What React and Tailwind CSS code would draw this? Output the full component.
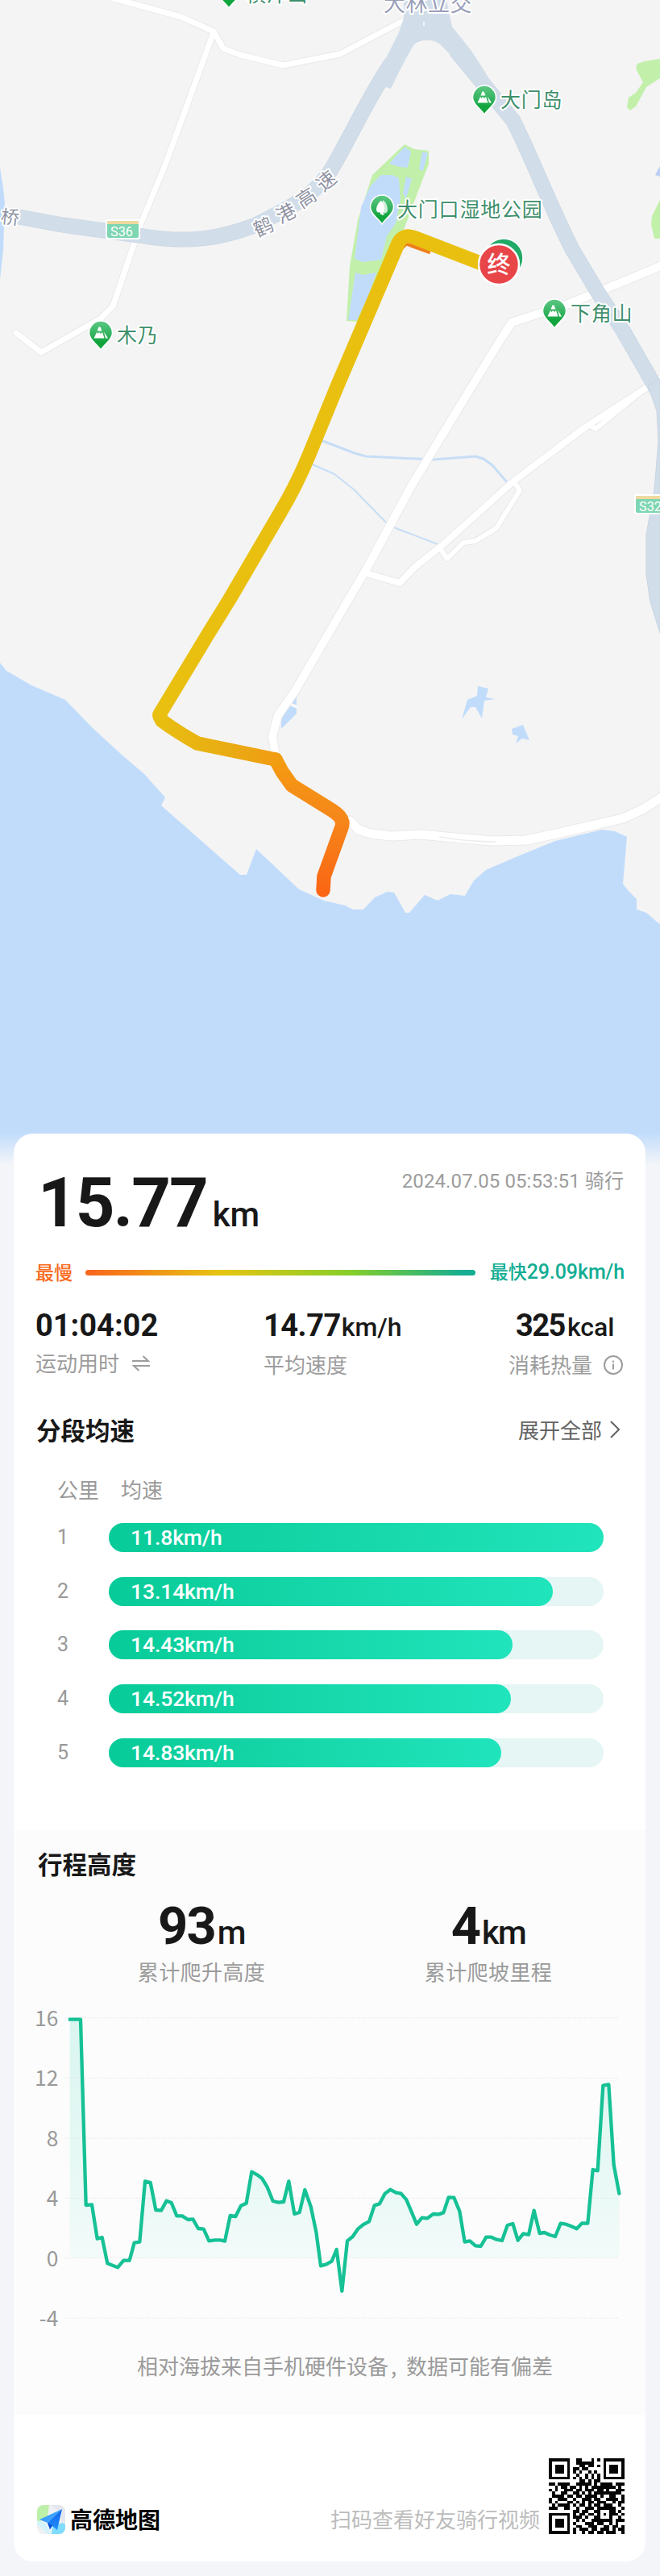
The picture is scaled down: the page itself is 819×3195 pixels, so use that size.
import React from "react";

const SANS = "font-['Noto_Sans_CJK_SC',sans-serif]";
const NUM = "font-['Roboto','Noto_Sans_CJK_SC',sans-serif]";

function Pin({ x, y, tree }) {
  return (
    <g transform={`translate(${x} ${y})`}>
      <path d="M-14.5 0A14.5 15 0 0 1 14.5 0C14.5 9 4 14 0 21C-4 14 -14.5 9 -14.5 0Z" fill="url(#pin)" stroke="#fff" strokeWidth="1.5" />
      {tree ? (
        <g fill="#fff">
          <path d="M1 -9C5 -7 7 -1 7 3C7 7 4 8 2.500 7.500V10H0V-5Z" opacity=".75" />
          <path d="M-1 -8C-5 -6 -7 0 -7 3C-7 6 -4 7 -2 6.500V9H0.500V6.500C4 6 4 -4 -1 -8Z" />
        </g>
      ) : (
        <g fill="#fff">
          <path d="M-4.500 -2.500L-2.500 -7.500H-0.500L1.500 -2.500Z" />
          <path d="M-5 -1L-8.500 6.500H4.500L2 -1L0 1L-2 -1L-3.500 1Z" />
          <path d="M4 -1.500L9 6.500H6Z" />
        </g>
      )}
    </g>
  );
}

function Label({ x, y, fill = "#3f8f6c", size = 25, spacing = 0.8, rotate = 0, anchor = "start", children }) {
  return (
    <text
      x={x}
      y={y - 1.5}
      transform={rotate ? `rotate(${rotate} ${x} ${y})` : undefined}
      fill={fill}
      fontSize={size}
      letterSpacing={spacing}
      textAnchor={anchor}
      dominantBaseline="central"
      stroke="#fff"
      strokeWidth="4"
      strokeLinejoin="round"
      paintOrder="stroke"
    >
      {children}
    </text>
  );
}

function Shield({ x, y, children }) {
  return (
    <g transform={`translate(${x} ${y})`}>
      <rect width="43" height="25" rx="3" fill="#fff" />
      <rect x="2" y="2" width="39" height="21" rx="2" fill="#7ed6b2" />
      <path d="M2 6V4Q2 2 4 2H39Q41 2 41 4V6Z" fill="#eed9a0" />
      <text x="20" y="20.500" fill="#fff" fontSize="17" textAnchor="middle" textLength="28" lengthAdjust="spacingAndGlyphs" fontFamily="Roboto">{children}</text>
    </g>
  );
}

const WHITE_ROADS = [
  [7, "141,-2 225,21 265,39 277,60 298,68 351,81 422,67 498,27"],
  [7, "265,40 225,150 204,207 175,277 140,380 125,395 51,437 20,413"],
  [10, "822,329 747,360 705,377 635,400 622,420 585,480 512,600 454,707 407,787 366,857 345,887 338,913 341,932"],
  [8, "822,468 802,481 726,530 637,597 548,677 515,703 496,723 454,711"],
  [6, "637,597 645,608 616,655 590,671 575,673 555,693 546,680"],
  [6, "788,492 739,532 731,527"],
  [11, "434,1018 445,1029 460,1034 486,1037 522,1035 564,1039 611,1043 653,1042 695,1033 773,1015 799,1003 822,988"],
];

function RouteMap() {
  return (
    <svg className={`block h-[1445px] w-[819px] ${SANS}`} viewBox="0 0 819 1445">
      <defs>
        <linearGradient id="pin" x1="0" y1="0" x2="0" y2="1">
          <stop offset="0" stopColor="#5cc983" />
          <stop offset="0.55" stopColor="#2cae58" />
          <stop offset="0.72" stopColor="#0fa53c" />
          <stop offset="1" stopColor="#0fa53c" />
        </linearGradient>
        <linearGradient id="mid" gradientUnits="userSpaceOnUse" x1="198" y1="0" x2="342" y2="0">
          <stop offset="0" stopColor="#e9be10" />
          <stop offset="0.6" stopColor="#e9ab14" />
          <stop offset="1" stopColor="#f19d12" />
        </linearGradient>
        <linearGradient id="end" gradientUnits="userSpaceOnUse" x1="0" y1="942" x2="0" y2="1112">
          <stop offset="0" stopColor="#f59b10" />
          <stop offset="0.4" stopColor="#f5881a" />
          <stop offset="1" stopColor="#fb6414" />
        </linearGradient>
        <linearGradient id="fade" x1="0" y1="0" x2="0" y2="1">
          <stop offset="0" stopColor="#f4f5f9" stopOpacity="0" />
          <stop offset="1" stopColor="#f4f5f9" />
        </linearGradient>
      </defs>
      <rect width="819" height="1445" fill="#f4f4f4" />

      <g fill="#c1dcfb">
        <path d="M0 822L8 832L39 850L81 868L115 903L151 936L179 960L205 989L200 999L298 1085H306L318 1053L371 1103L402 1117L428 1123L438 1128H451L465 1113L481 1106L489 1107L503 1132H508L527 1110L543 1117L559 1109L577 1111L588 1092L603 1079L640 1063L689 1043L747 1029L763 1031L778 1038L773 1096L779 1104L790 1115V1128L802 1132L816 1144L819 1146V1445H0Z" />
        <path d="M0 208L4 233L6 253L4 310L0 347Z" />
        <path d="M593 851L606 854L603 865L614 867L601 869L598 891L590 877H584L573 892L580 868L592 863Z" />
        <path d="M635 904L649 899L657 918L648 916L640 922L643 913L636 911Z" />
        <path d="M368 858V885L360 893L349 904V888L360 863Z" />
        <path d="M819 206L813 217L819 219Z" fill="#b9cff5" />
      </g>
      <g fill="#c2f0aa">
        <path d="M819 73L800 76L791 79Q788 83 791 89L798 102L789 115L780 121L778 133L782 137L789 132L802 108L819 97Z" />
        <path d="M819 248L809 268L808 278L812 296H819Z" />
        <path d="M502 179L514 185L532 187V203L514 250L498 293L473 337L444 399L430 398L434 330L444 273L462 217Z" />
      </g>
      <g fill="#c1dcfb">
        <path d="M502 182L510 188L506 208L496 207L483 203Z" />
        <path d="M473 217L487 217L495 221L497 247L491 277L480 293L473 322L450 325L440 321L448 257L460 230Z" />
        <path d="M441 338L450 341L467 338L458 365L443 397H432Z" />
        <path d="M524 188L531 190L525 212L520 210Z" />
        <path d="M504 219L511 222L504 246L500 240Z" />
      </g>
      <path d="M357 872L369 877" stroke="#f8f8f8" strokeWidth="4" />

      <g fill="none" stroke="#c7ddf6" strokeLinejoin="round">
        <path d="M398 546L440 562L454 566L538 570L590 566L600 569L611 577L629 598" strokeWidth="3" />
        <path d="M385 575L415 588L439 607L478 647L491 655L543 675" strokeWidth="2" />
      </g>

      <g fill="none" strokeLinejoin="round" strokeLinecap="round">
        {WHITE_ROADS.map(([w, p]) => (
          <polyline key={p} points={p} stroke="#e9e9ea" strokeWidth={w + 2} />
        ))}
        {WHITE_ROADS.map(([w, p]) => (
          <polyline key={p} points={p} stroke="#fff" strokeWidth={w} />
        ))}
      </g>
      <path d="M545 1038Q580 1044 615 1044" stroke="#ececec" strokeWidth="1.500" fill="none" />

      <g fill="none" stroke="#c9d5e2" strokeWidth="19">
        <path d="M18 268L78 279L172 292C230 302 270 297 315 280C360 258 395 240 413 207C440 160 460 115 486 78" />
        <path d="M565 62L603 108L637 150C660 195 680 250 710 309L742 363L773 410L819 490" />
      </g>
      <g fill="none" stroke="#d1deea" strokeWidth="17.500">
        <path d="M18 268L78 279L172 292C230 302 270 297 315 280C360 258 395 240 413 207C440 160 460 115 486 78" />
        <path d="M565 62L603 108L637 150C660 195 680 250 710 309L742 363L773 410L819 490" />
      </g>
      <path d="M501 0V22L495 40L474 82L466 104L485 110Q500 78 514 55Q520 50 530 50Q540 50 546 55Q570 78 595 110L610 102L585 63L561 33L554 0Z" fill="#d1deea" />
      <path d="M804 478L815 510L817 547L812 607L802 663V713L807 747L819 785V470Z" fill="#d1deea" stroke="#c9d5e2" />
      <path d="M526 27V32" stroke="#f4f4f4" strokeWidth="2" />

      <g fill="none" strokeWidth="17.500" strokeLinejoin="round">
        <path d="M498 308L504 302L534 313" stroke="#ee7f1c" strokeWidth="5" />
        <path d="M342 942L350 957L362 974L412 1005Q428 1015 424 1026L402 1087L401 1104" stroke="url(#end)" strokeLinecap="round" />
        <path d="M198 888L201 894Q220 908 245 922L342 942" stroke="url(#mid)" strokeLinecap="round" />
        <path d="M606 330L515 295Q500 289 494 302L418 480L384 563Q368 602 347 637L285 743L256 790L198 886" stroke="#e9c010" strokeLinecap="round" />
      </g>

      <circle cx="625" cy="320" r="24" fill="#21a966" stroke="#fff" strokeWidth="1.500" />
      <circle cx="619" cy="328" r="25" fill="#e84549" stroke="#fff" strokeWidth="2.500" />
      <text x="619" y="326" fill="#fff" fontSize="29" fontWeight="500" textAnchor="middle" dominantBaseline="central">终</text>

      <Pin x={284} y={-11} />
      <Pin x={601} y={121} />
      <Pin x={474} y={257} tree />
      <Pin x={688} y={386} />
      <Pin x={125} y={413} />
      <Label x={305} y={-8}>横洋山</Label>
      <Label x={621} y={123}>大门岛</Label>
      <Label x={493} y={259}>大门口湿地公园</Label>
      <Label x={708} y={388}>下角山</Label>
      <Label x={145} y={415}>木乃</Label>
      <Label x={476} y={4} fill="#999eb8" size={27} spacing={0.5}>大林立交</Label>
      <Label x={327} y={281} fill="#9093a3" size={24} rotate={-24} anchor="middle">鹤</Label>
      <Label x={355} y={264} fill="#9093a3" size={24} rotate={-28} anchor="middle">港</Label>
      <Label x={380} y={245} fill="#9093a3" size={24} rotate={-33} anchor="middle">高</Label>
      <Label x={405} y={224} fill="#9093a3" size={24} rotate={-40} anchor="middle">速</Label>
      <Label x={13} y={269} fill="#9093a3" size={23} rotate={6} anchor="middle">桥</Label>
      <Shield x={131} y={272}>S36</Shield>
      <Shield x={787} y={613}>S32</Shield>
      <rect y="1405" width="819" height="40" fill="url(#fade)" />
    </svg>
  );
}

const SPLITS = [
  { km: 1, speed: "11.8km/h", width: 614 },
  { km: 2, speed: "13.14km/h", width: 551 },
  { km: 3, speed: "14.43km/h", width: 501 },
  { km: 4, speed: "14.52km/h", width: 499 },
  { km: 5, speed: "14.83km/h", width: 487 },
];

const ELEVATION =
  "260,104 300,104 320,795 342,793 362,920 380,915 400,1012 438,1027 460,1001 482,1001 500,935 520,932 540,706 560,711 580,813 600,815 620,779 638,786 658,835 678,835 700,849 718,847 738,882 758,884 778,928 800,925 820,925 837,929 857,834 877,837 897,797 917,788 937,671 957,682 975,695 995,728 1016,780 1036,785 1056,783 1075,706 1096,828 1115,822 1135,738 1157,800 1177,895 1194,1021 1215,1015 1235,1004 1253,960 1273,1115 1293,928 1313,912 1333,883 1353,867 1374,856 1394,796 1413,790 1433,752 1453,737 1473,748 1493,752 1513,775 1531,818 1551,866 1571,842 1591,844 1613,828 1633,829 1651,823 1670,766 1690,767 1711,818 1730,932 1749,928 1770,946 1790,948 1810,914 1829,914 1849,923 1869,927 1889,870 1909,864 1928,926 1948,901 1968,905 1988,815 2009,900 2027,897 2047,906 2067,912 2087,863 2107,866 2127,874 2147,883 2167,862 2188,863 2207,663 2225,667 2245,350 2266,346 2285,645 2305,752";

const AXIS = [
  ["16", 98],
  ["12", 322],
  ["8", 546],
  ["4", 769],
  ["0", 992],
  ["-4", 1215],
];

function ElevationChart() {
  return (
    <svg className={`block h-[420px] w-[784px] ${SANS}`} viewBox="51 0 2352 1260">
      <defs>
        <linearGradient id="area" gradientUnits="userSpaceOnUse" x1="0" y1="104" x2="0" y2="992">
          <stop offset="0" stopColor="#d9f5ef" />
          <stop offset="0.7" stopColor="#e9f9f6" />
          <stop offset="1" stopColor="#f3fafa" />
        </linearGradient>
        <clipPath id="above">
          <rect x="0" y="0" width="2457" height="992" />
        </clipPath>
      </defs>
      <polygon points={`260,992 ${ELEVATION} 2305,992`} fill="url(#area)" clipPath="url(#above)" />
      {AXIS.map(([t, y]) => (
        <g key={t}>
          <path d={`M242 ${y}H2305`} stroke="#e6e6e6" strokeWidth="3" strokeDasharray="6 6" />
          <text x="217" y={y + 30} textAnchor="end" fontSize="79" fill="#999">{t}</text>
        </g>
      ))}
      <polyline points={ELEVATION} fill="none" stroke="#16c195" strokeWidth="13" strokeLinejoin="round" strokeLinecap="round" />
    </svg>
  );
}

const QR = [
  "1111111001100010101111111",
  "1000001001111110001000001",
  "1011101000110110101011101",
  "1011101011011000001011101",
  "1011101010100101001011101",
  "1000001001001010101000001",
  "1111111010101010101111111",
  "0000000000110101100000000",
  "1101111001111101011110111",
  "0010110110101011111111010",
  "1010011101101110110100111",
  "0100110011010101111111110",
  "0111101101101111010011001",
  "1001110010011101100111101",
  "1010001101010110111001011",
  "0101111010110101101110010",
  "1110011001001110111111001",
  "0000000011011001100011010",
  "1111111010110110101011101",
  "1000001011101001100010010",
  "1011101001010011111110111",
  "1011101010001110110010100",
  "1011101001100111001101101",
  "1000001010111011011101011",
  "1111111010010110110111001",
];

function QrCode() {
  return (
    <svg className="block h-[94px] w-[94px]" viewBox="0 0 25 25" shapeRendering="crispEdges">
      {QR.map((row, y) =>
        [...row].map((c, x) => (c === "1" ? <rect key={`${x}-${y}`} x={x} y={y} width="1" height="1" fill="#050505" /> : null))
      )}
    </svg>
  );
}

function AmapLogo() {
  return (
    <svg className="block h-[36px] w-[35px]" viewBox="0 0 35 36">
      <defs>
        <clipPath id="tile">
          <rect width="35" height="36" rx="8" />
        </clipPath>
        <linearGradient id="plane" x1="0" y1="0" x2="0" y2="1">
          <stop offset="0" stopColor="#0f62f0" />
          <stop offset="1" stopColor="#2290f8" />
        </linearGradient>
      </defs>
      <g clipPath="url(#tile)">
        <rect width="35" height="36" fill="#eef1f4" />
        <path d="M0 0H15L13 14L0 22Z" fill="#bdf0a8" />
        <path d="M17 0H35V36H30V10Z" fill="#e4e8ee" />
        <path d="M19 27L31 22L35 24V36H18Z" fill="#7fdcfb" />
        <path d="M0 19L10 22L18 36H14L0 24Z" fill="#d5f3fb" />
      </g>
      <path d="M31 5L3 18L13 22Z" fill="#3aa2fb" />
      <path d="M31 5L13 22L16 30L19 26L25 31Z" fill="url(#plane)" />
      <path d="M13 22L16 30L19 25Z" fill="#0a4fd0" />
    </svg>
  );
}

function Metric({ value, unit, label, className }) {
  return (
    <div className={`flex flex-col items-center ${className}`}>
      <div className={`flex h-[68px] items-baseline text-[#181818] ${NUM}`}>
        <span className="text-[65px] leading-[68px] font-bold tracking-[-2px]">{value}</span>
        <span className="ml-[3px] text-[41px] leading-[68px] font-medium tracking-[-1.500px]">{unit}</span>
      </div>
      <div className="mt-[4px] text-[26px] leading-[36px] tracking-[0.4px] text-[#9b9b9b]">{label}</div>
    </div>
  );
}

export default function App() {
  return (
    <div className={`h-[3195px] w-[819px] overflow-hidden bg-[#f4f5f9] ${SANS}`}>
      <RouteMap />
      <main className="relative mx-auto -mt-[39px] ml-[17px] flex h-[1771px] w-[784px] flex-col overflow-hidden rounded-[24px] bg-white">
        <section className="flex h-[148px] shrink-0 items-start justify-between pr-[27px] pl-[30px]">
          <div className={`mt-[36px] flex items-baseline text-[#181818] ${NUM}`}>
            <span className="text-[85px] leading-[100px] font-bold tracking-[-2px]">15.77</span>
            <span className="ml-[7px] text-[42px] leading-[100px] font-medium tracking-[-0.2px]">km</span>
          </div>
          <div className={`mt-[43px] text-[24px] leading-[32px] tracking-[0.1px] text-[#9c9c9c] ${NUM}`}>2024.07.05 05:53:51 骑行</div>
        </section>

        <section className="flex h-[46px] shrink-0 items-center pr-[26px] pl-[27px] text-[23px] leading-[46px] font-medium">
          <span className="text-[#f96a1c]">最慢</span>
          <span className="mt-[2px] ml-[16px] h-[7px] w-[484px] rounded-full bg-[linear-gradient(90deg,#f9641e_0%,#e6c512_35%,#86ce2a_68%,#16ad92_97%)]" />
          <span className="ml-auto whitespace-nowrap tracking-[-0.1px] text-[#12ad93]">
            最快<span className={`text-[25px] ${NUM}`}>29.09km/h</span>
          </span>
        </section>

        <section className="mt-[16px] flex h-[88px] shrink-0">
          <div className="w-[283px] pl-[27px]">
            <div className={`text-[38px] leading-[56px] font-bold tracking-[0px] text-[#181818] ${NUM}`}>01:04:02</div>
            <div className="flex items-center text-[26px] leading-[36px] text-[#9c9c9c]">
              运动用时
              <svg className="mt-[2px] ml-[16px] h-[22px] w-[22px]" viewBox="0 0 22 22" fill="none" stroke="#9c9c9c" strokeWidth="2">
                <path d="M0 8H20L13.500 2M22 14H2L8.500 20" />
              </svg>
            </div>
          </div>
          <div className="w-[283px] pl-[27px]">
            <div className={`flex items-baseline text-[#181818] ${NUM}`}>
              <span className="text-[38px] leading-[56px] font-bold tracking-[-0.5px]">14.77</span>
              <span className="ml-[1px] text-[32px] leading-[56px] font-medium">km/h</span>
            </div>
            <div className="text-[26px] leading-[36px] text-[#9c9c9c]">平均速度</div>
          </div>
          <div className="pl-[48px]">
            <div className={`flex items-baseline pl-[9px] text-[#181818] ${NUM}`}>
              <span className="text-[38px] leading-[56px] font-bold tracking-[-1.5px]">325</span>
              <span className="ml-[3px] text-[32px] leading-[56px] font-medium">kcal</span>
            </div>
            <div className="flex items-center text-[26px] leading-[36px] text-[#9c9c9c]">
              消耗热量
              <svg className="mt-[2px] ml-[14px] h-[24px] w-[24px]" viewBox="0 0 24 24" fill="none" stroke="#9c9c9c" strokeWidth="2">
                <circle cx="12" cy="12" r="11" />
                <path d="M12 10.500V17.500M12 6.500V8.800" />
              </svg>
            </div>
          </div>
        </section>

        <section className="mt-[49px] flex h-[40px] shrink-0 items-center justify-between pr-[32px] pl-[28px]">
          <h2 className="text-[30.500px] leading-[40px] font-bold text-[#181818]">分段均速</h2>
          <div className="flex items-center text-[26px] leading-[40px] text-[#636363]">
            展开全部
            <svg className="ml-[10px] h-[22px] w-[12px]" viewBox="0 0 12 22" fill="none" stroke="#636363" strokeWidth="2">
              <path d="M1 1L11 11L1 21" />
            </svg>
          </div>
        </section>

        <section className="mt-[34px] flex h-[442px] shrink-0 flex-col pl-[54px]">
          <div className="flex h-[40px] gap-[27px] text-[26px] leading-[40px] text-[#999]">
            <span>公里</span>
            <span>均速</span>
          </div>
          <div className="mt-[22px] flex flex-col gap-[30.700px]">
            {SPLITS.map((s) => (
              <div key={s.km} className="flex h-[36px] items-center">
                <span className={`w-[64px] text-[25px] leading-[36px] text-[#999] ${NUM}`}>{s.km}</span>
                <div className="h-[36px] w-[614px] rounded-full bg-[#e5f6f4]">
                  <div
                    className={`h-[36px] rounded-full bg-gradient-to-r from-[#07cb98] to-[#20e4bc] pl-[27px] text-[26.500px] leading-[36px] font-medium tracking-[-0.1px] text-white ${NUM}`}
                    style={{ width: s.width }}
                  >
                    {s.speed}
                  </div>
                </div>
              </div>
            ))}
          </div>
        </section>

        <section className="mt-[1px] flex h-[725px] shrink-0 flex-col bg-[#fcfcfc]">
          <h2 className="mt-[21px] pl-[30px] text-[30.500px] leading-[40px] font-bold text-[#181818]">行程高度</h2>
          <div className="mt-[24px] flex">
            <Metric value="93" unit="m" label="累计爬升高度" className="ml-[137px] w-[192px]" />
            <Metric value="4" unit="km" label="累计爬坡里程" className="ml-[164px] w-[192px]" />
          </div>
          <div className="mt-[7px]">
            <ElevationChart />
          </div>
          <p className="mt-[26px] pl-[153px] text-[26px] leading-[36px] whitespace-nowrap text-[#9a9a9a]">
            相对海拔来自手机硬件设备<span className="inline-block w-[22px] pl-[3px]">,</span>数据可能有偏差
          </p>
        </section>

        <footer className="mt-[53px] flex h-[95px] shrink-0 items-end pr-[26px] pl-[29px]">
          <AmapLogo />
          <span className="mb-[2px] ml-[6px] text-[28px] leading-[34px] font-bold text-black">高德地图</span>
          <span className="mb-[2px] ml-auto text-[26px] leading-[34px] text-[#bcbcbc]">扫码查看好友骑行视频</span>
          <div className="ml-[11px]">
            <QrCode />
          </div>
        </footer>
      </main>
    </div>
  );
}
